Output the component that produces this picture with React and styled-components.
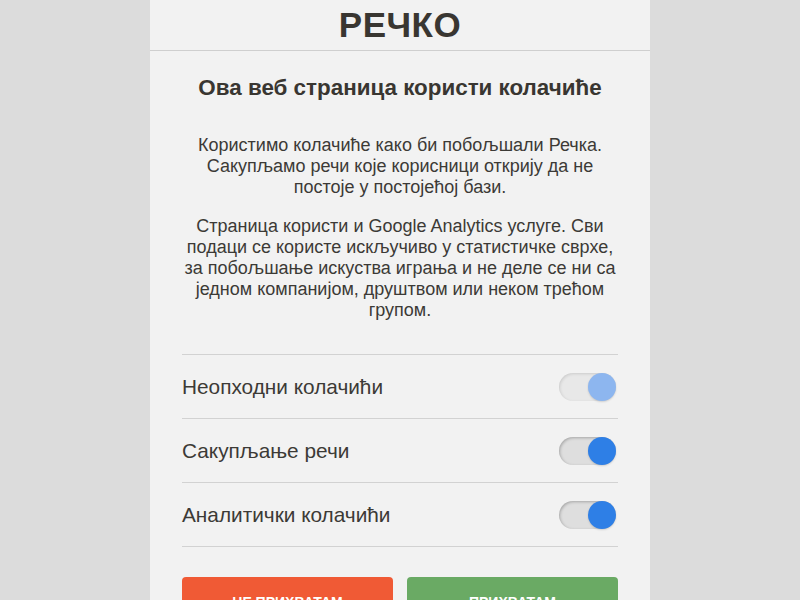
import styled, { createGlobalStyle } from "styled-components";

const Global = createGlobalStyle`
    html, body {
        margin: 0;
        padding: 0;
        background: #dcdcdc;
        font-family: "Liberation Sans", Arial, sans-serif;
    }
`;

const Page = styled.div`
    width: 100%;
    height: 600px;
    overflow: hidden;
    display: flex;
    justify-content: center;
`;

const Panel = styled.div`
    width: 500px;
    min-height: 700px;
    background: #f2f2f2;
    display: flex;
    flex-direction: column;
`;

const Header = styled.header`
    height: 50px;
    border-bottom: 1px solid #cfcfcf;
    display: flex;
    align-items: center;
    justify-content: center;
`;

const Logo = styled.h1`
    margin: 0;
    font-size: 35px;
    font-weight: 700;
    color: #393631;
    letter-spacing: 0.5px;
`;

const Body = styled.div`
    padding: 24px 32px 0;
    display: flex;
    flex-direction: column;
`;

const Title = styled.h2`
    margin: 0 0 35px;
    font-size: 22.4px;
    line-height: 25px;
    font-weight: 700;
    color: #393631;
    text-align: center;
`;

const Text = styled.p`
    margin: 0 0 ${(p) => p.gap}px;
    font-size: 18px;
    line-height: normal;
    color: #3c3a36;
    text-align: center;
`;

const List = styled.div`
    border-top: 1px solid #d2d2d2;
`;

const Row = styled.div`
    height: 63px;
    border-bottom: 1px solid #d2d2d2;
    display: flex;
    align-items: center;
    justify-content: space-between;
    padding-right: 2px;
`;

const Label = styled.span`
    font-size: 20.8px;
    color: #3c3a36;
`;

const Track = styled.div`
    width: 57px;
    height: 28px;
    border-radius: 14px;
    background: ${(p) => (p.disabled ? "#e8e8e8" : "#dedede")};
    box-shadow: inset 1px 1px 3px rgba(0, 0, 0, ${(p) => (p.disabled ? 0.12 : 0.25)});
    display: flex;
    justify-content: flex-end;
    align-items: center;
`;

const Knob = styled.div`
    width: 28px;
    height: 28px;
    border-radius: 50%;
    background: ${(p) => (p.disabled ? "#8db6ef" : "#2e7fe6")};
    box-shadow: 0 1px 2px rgba(0, 0, 0, 0.15);
`;

const Buttons = styled.div`
    margin-top: 30px;
    display: flex;
    gap: 14px;
`;

const Button = styled.button`
    flex: 1;
    height: 50px;
    border: none;
    border-radius: 4px;
    background: ${(p) => p.color};
    color: #fff;
    font-family: "Liberation Sans", Arial, sans-serif;
    font-size: 14px;
    font-weight: 700;
    text-transform: uppercase;
`;

const rows = [
    { label: "Неопходни колачићи", disabled: true },
    { label: "Сакупљање речи" },
    { label: "Аналитички колачићи" },
];

const App = () => {
    return (
        <>
            <Global />
            <Page>
                <Panel>
                    <Header>
                        <Logo>РЕЧКО</Logo>
                    </Header>
                    <Body>
                        <Title>Ова веб страница користи колачиће</Title>
                        <Text gap={18}>
                            Користимо колачиће како би побољшали Речка. Сакупљамо речи које корисници открију да не постоје у постојећој бази.
                        </Text>
                        <Text gap={33}>
                            Страница користи и Google Analytics услуге. Сви подаци се користе искључиво у статистичке сврхе, за побољшање искуства играња и не деле се ни са једном компанијом, друштвом или неком трећом групом.
                        </Text>
                        <List>
                            {rows.map((r) => (
                                <Row key={r.label}>
                                    <Label>{r.label}</Label>
                                    <Track disabled={r.disabled}>
                                        <Knob disabled={r.disabled} />
                                    </Track>
                                </Row>
                            ))}
                        </List>
                        <Buttons>
                            <Button color="#f05a35">Не прихватам</Button>
                            <Button color="#6aaa64">Прихватам</Button>
                        </Buttons>
                    </Body>
                </Panel>
            </Page>
        </>
    );
};

export default App;
